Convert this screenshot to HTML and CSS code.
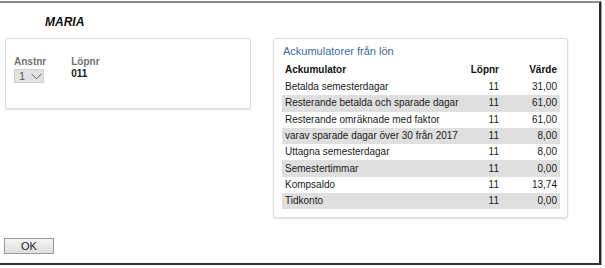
FILE: index.html
```html
<!DOCTYPE html>
<html lang="sv">
<head>
    <meta charset="UTF-8">
    <title>MARIA</title>
    <link rel="stylesheet" href="styles.css">
</head>
<body>

<div class="dialog">
    <div class="header">
        <span class="name">MARIA</span>
    </div>

    <div class="content">
        <div class="panel info">
            <div class="field">
                <div class="label">Anstnr</div>
                <div class="select">
                    <span>1</span>
                    <svg width="11" height="7" viewBox="0 0 11 7"><polyline points="0.5,0.8 5.5,5.8 10.5,0.8" fill="none" stroke="#666" stroke-width="1"/></svg>
                </div>
            </div>
            <div class="field">
                <div class="label">Löpnr</div>
                <div class="value">011</div>
            </div>
        </div>

        <div class="panel acc">
            <div class="acc-title">Ackumulatorer från lön</div>
            <div class="grid">
                <div class="row head">
                    <span>Ackumulator</span><span class="num">Löpnr</span><span class="num">Värde</span>
                </div>
                <div class="row">
                    <span>Betalda semesterdagar</span><span class="num">11</span><span class="num">31,00</span>
                </div>
                <div class="row alt">
                    <span>Resterande betalda och sparade dagar</span><span class="num">11</span><span class="num">61,00</span>
                </div>
                <div class="row">
                    <span>Resterande omräknade med faktor</span><span class="num">11</span><span class="num">61,00</span>
                </div>
                <div class="row alt">
                    <span>varav sparade dagar över 30 från 2017</span><span class="num">11</span><span class="num">8,00</span>
                </div>
                <div class="row">
                    <span>Uttagna semesterdagar</span><span class="num">11</span><span class="num">8,00</span>
                </div>
                <div class="row alt">
                    <span>Semestertimmar</span><span class="num">11</span><span class="num">0,00</span>
                </div>
                <div class="row">
                    <span>Kompsaldo</span><span class="num">11</span><span class="num">13,74</span>
                </div>
                <div class="row alt">
                    <span>Tidkonto</span><span class="num">11</span><span class="num">0,00</span>
                </div>
            </div>
        </div>
    </div>

    <div class="footer">
        <button class="ok">OK</button>
    </div>
</div>

</body>
</html>
```

FILE: styles.css
```css
body {
    margin: 0;
    background: #fff;
    font-family: "Liberation Sans", Arial, sans-serif;
    color: #1a1a1a;
}
.dialog {
    margin-top: 1px;
    width: 599px;
    height: 260px;
    border-top: 2px solid #8c8c8c;
    border-right: 2px solid #2b2b2b;
    border-bottom: 2px solid #333;
    box-shadow: 1px 1px 0 #9a9a9a;
    display: flex;
    flex-direction: column;
    background: #fff;
}
.header {
    padding: 9px 0 0 45px;
    height: 26px;
    box-sizing: border-box;
}
.name {
    font-size: 12px;
    line-height: 14px;
    font-weight: bold;
    font-style: italic;
    color: #111;
}
.content {
    display: flex;
    align-items: flex-start;
    gap: 22px;
    padding: 9px 0 0 5px;
}
.panel {
    box-sizing: border-box;
    border: 1px solid #dcdcdc;
    border-radius: 3px;
    box-shadow: 0 1px 2px rgba(0, 0, 0, 0.12);
    background: #fff;
}
.info {
    width: 246px;
    height: 71px;
    display: flex;
    gap: 25px;
    padding: 17px 0 0 8px;
}
.label {
    font-size: 10px;
    font-weight: bold;
    color: #727272;
    line-height: 12px;
}
.value {
    font-size: 10px;
    font-weight: bold;
    line-height: 12px;
    color: #1a1a1a;
}
.select {
    margin-top: 1px;
    width: 30px;
    height: 14px;
    box-sizing: border-box;
    background: #e2e2e2;
    border: 1px solid #cfcfcf;
    display: flex;
    align-items: center;
    gap: 6px;
    padding-left: 4px;
    font-size: 11px;
    color: #555;
}
.select svg { margin-top: 1px; }
.acc {
    width: 295px;
    padding: 6px 7px 8px 8px;
}
.acc-title {
    font-size: 11px;
    line-height: 13px;
    color: #3a6a9c;
    padding-left: 1px;
}
.grid { margin-top: 3px; }
.row {
    display: grid;
    grid-template-columns: 1fr 38px 58px;
    height: 16.3px;
    align-items: center;
    font-size: 10px;
    line-height: 12px;
    white-space: nowrap;
}
.row span { padding: 0 3px; }
.row.head {
    height: 18px;
    font-weight: bold;
    color: #111;
}
.row.alt { background: #dfdfdf; }
.num { text-align: right; }
.footer {
    margin-top: auto;
    padding: 0 0 9px 4px;
}
.ok {
    width: 50px;
    height: 16px;
    border: 1px solid #9a9a9a;
    border-radius: 0;
    background: linear-gradient(#f4f4f4, #dedede);
    font-family: "Liberation Sans", Arial, sans-serif;
    font-size: 11px;
    color: #222;
    padding: 0;
}
```
